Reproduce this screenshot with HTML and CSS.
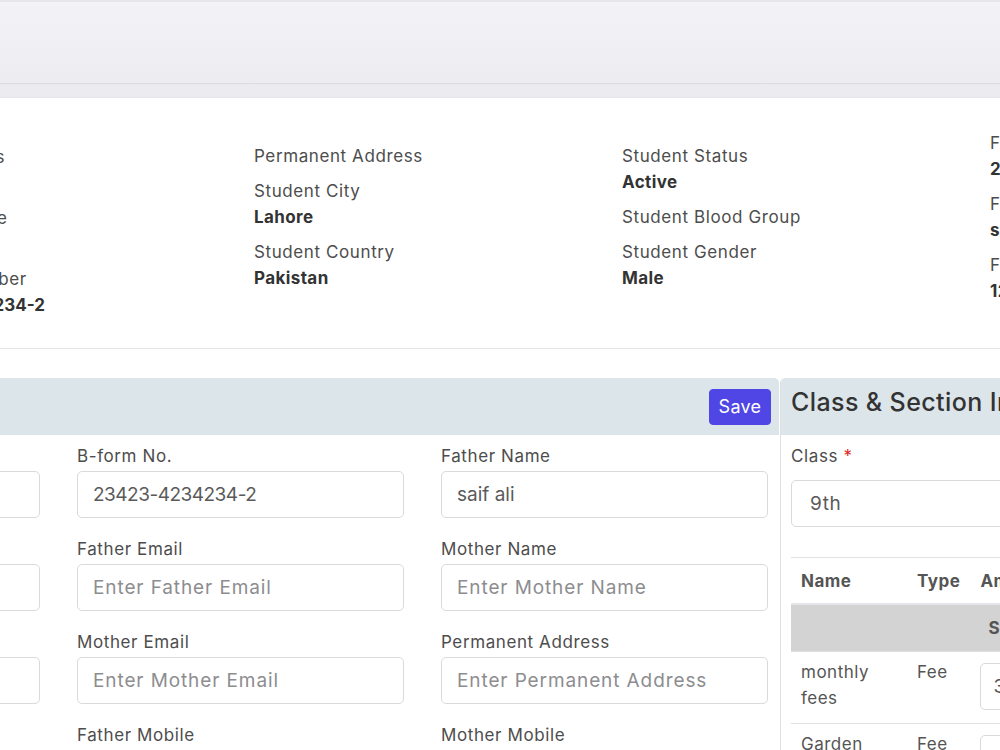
FILE: index.html
```html
<!DOCTYPE html>
<html>
<head>
<meta charset="utf-8">
<link rel="stylesheet" href="styles.css">
</head>
<body>
<div class="page">
  <div class="topbar"></div>
  <div class="strip"></div>
  <section class="info">
    <div class="info-col first">
      <div class="item"><div class="lbl">Student Class</div><div class="val">9th</div></div>
      <div class="item"><div class="lbl">Student Name</div><div class="val">ahmed</div></div>
      <div class="item"><div class="lbl">Contact Number</div><div class="val num">23423-4234234-2</div></div>
    </div>
    <div class="info-col">
      <div class="item"><div class="lbl">Permanent Address</div></div>
      <div class="item"><div class="lbl">Student City</div><div class="val">Lahore</div></div>
      <div class="item"><div class="lbl">Student Country</div><div class="val">Pakistan</div></div>
    </div>
    <div class="info-col">
      <div class="item"><div class="lbl">Student Status</div><div class="val">Active</div></div>
      <div class="item"><div class="lbl">Student Blood Group</div></div>
      <div class="item"><div class="lbl">Student Gender</div><div class="val">Male</div></div>
    </div>
    <div class="info-col">
      <div class="item"><div class="lbl">Father Mobile</div><div class="val">2342342342</div></div>
      <div class="item"><div class="lbl">Father Name</div><div class="val">saif ali</div></div>
      <div class="item"><div class="lbl">Father CNIC</div><div class="val">12345-1234567-1</div></div>
    </div>
  </section>

  <div class="cards">
    <div class="card left">
      <div class="card-head">
        <button class="btn-save">Save</button>
      </div>
      <div class="form-grid">
        <div class="field"><label>Student Name</label><input type="text" value="ahmed"></div>
        <div class="field"><label>B-form No.</label><input class="num" type="text" value="23423-4234234-2"></div>
        <div class="field"><label>Father Name</label><input type="text" value="saif ali"></div>

        <div class="field"><label>Father CNIC</label><input type="text" placeholder="Enter Father CNIC"></div>
        <div class="field"><label>Father Email</label><input type="text" placeholder="Enter Father Email"></div>
        <div class="field"><label>Mother Name</label><input type="text" placeholder="Enter Mother Name"></div>

        <div class="field"><label>Mother CNIC</label><input type="text" placeholder="Enter Mother CNIC"></div>
        <div class="field"><label>Mother Email</label><input type="text" placeholder="Enter Mother Email"></div>
        <div class="field"><label>Permanent Address</label><input type="text" placeholder="Enter Permanent Address"></div>

        <div class="field"><label>Current Address</label><input type="text" placeholder="Enter Current Address"></div>
        <div class="field"><label>Father Mobile</label><input type="text" placeholder="Enter Father Mobile"></div>
        <div class="field"><label>Mother Mobile</label><input type="text" placeholder="Enter Mother Mobile"></div>
      </div>
    </div>

    <div class="card right">
      <div class="card-head">
        <h3 class="card-title">Class &amp; Section Information</h3>
      </div>
      <div class="right-body">
        <div class="field class-field"><label>Class <span class="req">*</span></label><div class="select">9th</div></div>
        <table class="fees">
          <thead>
            <tr><th class="c-name">Name</th><th class="c-type">Type</th><th class="c-amt">Amount</th></tr>
          </thead>
          <tbody>
            <tr class="group"><td colspan="3">Student Fee</td></tr>
            <tr><td>monthly fees</td><td>Fee</td><td><div class="amt">3000</div></td></tr>
            <tr><td>Garden fees</td><td>Fee</td><td><div class="amt">100</div></td></tr>
          </tbody>
        </table>
      </div>
    </div>
  </div>
</div>
</body>
</html>
```

FILE: styles.css
```css
html, body {
  margin: 0;
  padding: 0;
  background: #ffffff;
  overflow: hidden;
}
body {
  font-family: "Inter", "Noto Sans", sans-serif;
  color: #444;
}
.page {
  width: 1700px;
  margin-left: -297px;
}
.topbar {
  height: 84px;
  background: linear-gradient(#f3f2f7, #edecf1);
  border-top: 2px solid #e7e6eb;
  box-sizing: border-box;
  border-bottom: 1px solid #dcdce0;
}
.strip {
  height: 13px;
  background: #ecebf0;
  border-bottom: 1px solid #e6e6ea;
}
.info {
  height: 251px;
  box-sizing: border-box;
  border-bottom: 1px solid #e4e5e9;
  display: grid;
  grid-template-columns: repeat(4, 368px);
  padding-left: 183px;
  padding-bottom: 12px;
  align-items: center;
}
.info-col.first {
  align-self: start;
  padding-top: 46px;
}
.item {
  margin-bottom: 9px;
}
.item:last-child { margin-bottom: 0; }
.lbl {
  font-size: 17px;
  line-height: 26px;
  letter-spacing: 0.6px;
  color: #4d4d4d;
  white-space: nowrap;
}
.val {
  font-size: 17px;
  line-height: 26px;
  letter-spacing: 0.4px;
  font-weight: 700;
  color: #333;
  white-space: nowrap;
}
.val.num {
  letter-spacing: 0;
}
.cards {
  display: flex;
  margin-top: 29px;
  gap: 1px;
  align-items: flex-start;
}
.card {
  border-radius: 5px;
  background: #fff;
}
.card.left {
  width: 1076px;
  flex: none;
}
.card.right {
  flex: 1;
  border-left: 1px solid #dfe1e4;
}
.card-head {
  height: 57px;
  background: #dce5ea;
  border-radius: 5px 5px 0 0;
  display: flex;
  align-items: center;
  box-sizing: border-box;
}
.card.left .card-head {
  justify-content: flex-end;
  padding-right: 8px;
}
.btn-save {
  font-family: inherit;
  font-size: 18px;
  letter-spacing: 0.3px;
  color: #fff;
  background: #4f46e5;
  border: 1px solid #4f46e5;
  border-radius: 4px;
  height: 36px;
  width: 62px;
  padding: 0;
  margin-top: 0;
}
.card-title {
  margin: 0 0 10px 0;
  padding-left: 10px;
  font-size: 25px;
  font-weight: 500;
  letter-spacing: 0.4px;
  color: #333;
  white-space: nowrap;
}
.form-grid {
  display: grid;
  grid-template-columns: repeat(3, 327px);
  column-gap: 37px;
  padding: 8px 10px 0 10px;
}
.field {
  display: flex;
  flex-direction: column;
  margin-bottom: 18px;
}
.field label {
  font-size: 17px;
  line-height: 26px;
  letter-spacing: 0.6px;
  color: #4d4d4d;
  margin-bottom: 2px;
}
.field input {
  height: 47px;
  box-sizing: border-box;
  border: 1px solid #d8dade;
  border-radius: 5px;
  padding: 0 15px;
  font-family: inherit;
  font-size: 19px;
  color: #5a5a5a;
  background: #fff;
  outline: none;
}
.field input.num {
  letter-spacing: -0.5px;
}
.field input::placeholder {
  color: #8d8d8f;
  letter-spacing: 0.9px;
}
.right-body {
  padding: 8px 0 0 10px;
}
.req { color: #e02424; }
.class-field label { margin-bottom: 11px; }
.select {
  height: 47px;
  box-sizing: border-box;
  border: 1px solid #d8dade;
  border-radius: 5px;
  padding: 0 18px;
  font-size: 19px;
  letter-spacing: 0.6px;
  color: #5a5a5a;
  display: flex;
  align-items: center;
  width: 400px;
}
.fees {
  margin-top: 30px;
  border-collapse: collapse;
  width: 500px;
  font-size: 17px;
  letter-spacing: 0.5px;
  color: #555;
  border-top: 1px solid #dfe1e4;
}
.fees th {
  text-align: left;
  font-weight: 700;
  padding: 10px 10px 9px;
  height: 26px;
  border-bottom: 2px solid #e4e6e9;
}
.fees th.c-name { width: 96px; }
.fees th.c-type { width: 42px; }
.fees td {
  padding: 7px 10px 12px;
  vertical-align: top;
  line-height: 26px;
  border-bottom: 1px solid #dfe1e4;
}
.fees tr.group td {
  background: #d3d3d3;
  text-align: center;
  font-weight: 700;
  height: 46px;
  padding: 0;
  vertical-align: middle;
}
.amt {
  height: 47px;
  box-sizing: border-box;
  border: 1px solid #d8dade;
  border-radius: 5px;
  padding: 0 12px;
  display: flex;
  align-items: center;
  font-size: 19px;
  margin-top: 4px;
}
```
